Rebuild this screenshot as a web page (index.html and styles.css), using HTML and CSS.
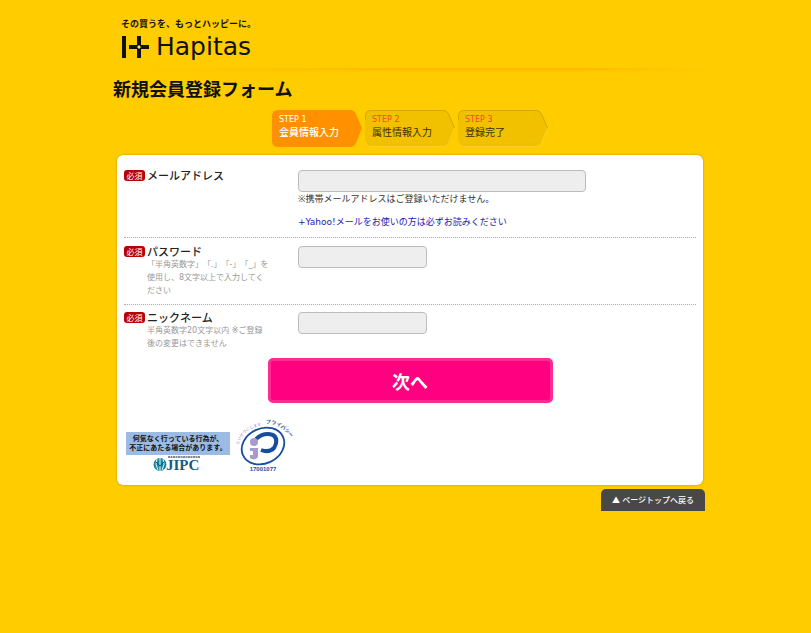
FILE: index.html
```html
<!DOCTYPE html>
<html lang="ja">
<head>
<meta charset="utf-8">
<meta name="viewport" content="width=device-width, initial-scale=1">
<title>新規会員登録フォーム</title>
<link rel="stylesheet" href="styles.css">
</head>
<body>
<div class="page">
  <header class="header">
    <p class="tagline">その買うを、もっとハッピーに。</p>
    <a class="logo" href="#">
      <svg class="logo-mark" viewBox="0 0 28 22" aria-hidden="true">
        <path d="M3 0v22M8 11h20M18 0v22" stroke="#111" stroke-width="4"/>
        <path d="M18 9l2 2l-2 2l-2-2z" fill="#ffe15a"/>
      </svg>
      <span class="logo-name">Hapitas</span>
    </a>
  </header>
  <main>
    <h1 class="title">新規会員登録フォーム</h1>
    <ol class="steps">
      <li class="step step-current">
        <svg class="step-shape" viewBox="0 0 90 37" aria-hidden="true"><path d="M6 0H78Q82 0 84 4L90 18L84 33Q82 37 78 37H6Q0 37 0 31V6Q0 0 6 0Z" fill="#ff9100"/></svg>
        <span class="step-no">STEP 1</span><span class="step-name">会員情報入力</span>
      </li>
      <li class="step">
        <svg class="step-shape" viewBox="0 0 90 37" aria-hidden="true"><path d="M6 0H78Q82 0 84 4L90 18L84 33Q82 36 78 36H6Q0 36 0 31V6Q0 0 6 0Z" fill="#f1c100"/><path d="M.5 10V6Q.5 .5 6 .5H78Q82 .5 83.500 4L89.500 18" fill="none" stroke="#d3a900"/><path d="M89.500 18L83.500 33Q82 36.500 78 36.500H6Q1 36.500 .5 31" fill="none" stroke="#fad02a"/></svg>
        <span class="step-no">STEP 2</span><span class="step-name">属性情報入力</span>
      </li>
      <li class="step">
        <svg class="step-shape" viewBox="0 0 90 37" aria-hidden="true"><path d="M6 0H78Q82 0 84 4L90 18L84 33Q82 36 78 36H6Q0 36 0 31V6Q0 0 6 0Z" fill="#f1c100"/><path d="M.5 10V6Q.5 .5 6 .5H78Q82 .5 83.500 4L89.500 18" fill="none" stroke="#d3a900"/><path d="M89.500 18L83.500 33Q82 36.500 78 36.500H6Q1 36.500 .5 31" fill="none" stroke="#fad02a"/></svg>
        <span class="step-no">STEP 3</span><span class="step-name">登録完了</span>
      </li>
    </ol>
    <form class="panel">
      <div class="row">
        <span class="badge">必須</span>
        <div class="caption"><label for="mail">メールアドレス</label></div>
        <div class="field">
          <input id="mail" class="input input-wide" type="email">
          <p class="note">※携帯メールアドレスはご登録いただけません。</p>
          <a class="note-link" href="#">+Yahoo!メールをお使いの方は必ずお読みください</a>
        </div>
      </div>
      <div class="row">
        <span class="badge">必須</span>
        <div class="caption"><label for="password">パスワード</label>
          <p class="help">「半角英数字」「.」「-」「_」を<br>使用し、8文字以上で入力してく<br>ださい</p></div>
        <div class="field"><input id="password" class="input" type="password"></div>
      </div>
      <div class="row">
        <span class="badge">必須</span>
        <div class="caption"><label for="nickname">ニックネーム</label>
          <p class="help">半角英数字20文字以内 ※ご登録<br>後の変更はできません</p></div>
        <div class="field"><input id="nickname" class="input" type="text"></div>
      </div>
      <button class="next" type="button">次へ</button>
      <div class="seals">
        <a class="jipc" href="#">
          <span class="jipc-text">何気なく行っている行為が、<br>不正にあたる場合があります。</span>
          <svg class="jipc-logo" viewBox="0 0 50 16" role="img" aria-label="JIPC">
            <path d="M15 1H47" stroke="#111" stroke-width="1" stroke-dasharray="2 .5"/>
            <ellipse cx="7" cy="8.500" rx="6.500" ry="6.500" fill="#1687a3"/>
            <path d="M4 3Q1.500 8 5 14M7 2V15M10 3Q12.500 8 9 14" fill="none" stroke="#e8f7fa" stroke-width="1"/>
            <path d="M3 6L7 10L11 6" fill="none" stroke="#0a4f70" stroke-width="1"/>
            <text x="13" y="14" class="jipc-name">JIPC</text>
          </svg>
        </a>
        <a class="pmark" href="#">
          <svg viewBox="0 0 56 56" role="img" aria-label="プライバシーマーク 17001077">
            <defs>
              <path id="arc-left" d="M3 28Q5 12 28 8"/>
              <path id="arc-right" d="M30 7Q43 5 56 22"/>
            </defs>
            <ellipse cx="27" cy="29" rx="22" ry="17.500" transform="rotate(-25 27 29)" fill="#fff" stroke="#174c9e" stroke-width="1.800"/>
            <path d="M20 22Q28 15 37 18Q43 22 38 31Q33 36 25 33" fill="none" stroke="#174c9e" stroke-width="4"/>
            <circle cx="18" cy="25" r="4" fill="#a69bd0"/>
            <path d="M14 31H22V40L20 42Q16 43 14 41V38H17V34H14Z" fill="#a69bd0"/>
            <text class="arc-soft"><textPath href="#arc-left">たいせつにします</textPath></text>
            <text class="arc-strong"><textPath href="#arc-right">プライバシー</textPath></text>
            <text x="27" y="54" class="pmark-no">17001077</text>
          </svg>
        </a>
      </div>
    </form>
  </main>
  <footer class="footer"><a class="to-top" href="#">▲ ページトップへ戻る</a></footer>
</div>
</body>
</html>
```
FILE: styles.css
```css
* { box-sizing: border-box; }
body {
  margin: 0;
  background: #fc0;
  color: #333;
  font-family: "Noto Sans", "Noto Sans CJK JP", sans-serif;
  font-size: 9px;
  line-height: 12px;
}
p, h1, ol { margin: 0; padding: 0; }
a { text-decoration: none; color: inherit; }
.page { max-width: 599px; margin: 0 auto; }

.header { padding: 18px 0 9px 15px; position: relative; }
.header::after {
  content: "";
  position: absolute;
  left: 0; right: 0; bottom: 0;
  height: 5px;
  background: linear-gradient(#ffb600, #fc0);
  -webkit-mask-image: linear-gradient(90deg, transparent 8%, #000 50%, #000 80%, transparent);
  mask-image: linear-gradient(90deg, transparent 8%, #000 50%, #000 80%, transparent);
}
.tagline { font-size: 9px; font-weight: 700; color: #111; }
.logo { display: flex; align-items: center; gap: 7px; height: 34px; color: #111; }
.logo-mark { width: 28px; height: 22px; }
.logo-name { font-family: "DejaVu Sans", sans-serif; font-size: 25px; line-height: 32px; }

.title { margin: 4px 0 8px 7px; font-size: 18px; line-height: 25px; font-weight: 700; color: #111; }
.steps { display: flex; gap: 3px; justify-content: center; list-style: none; margin-bottom: 8px; padding-left: 9px; }
.step { position: relative; width: 90px; height: 37px; padding: 4px 7px; display: flex; flex-direction: column; }
.step-shape { position: absolute; inset: 0; width: 100%; height: 100%; }
.step-no, .step-name { position: relative; }
.step-no { font-family: "DejaVu Sans", sans-serif; font-size: 8px; color: #ff4438; }
.step-name { font-size: 10px; color: #3b3000; }
.step-current span { color: #fff; }
.step-current .step-name { font-weight: 500; }

.panel {
  margin: 0 2px 0 11px;
  padding: 7px 7px 12px;
  background: #fff;
  box-shadow: 0 0 2px #a88600;
  border-radius: 6px;
}
.row {
  display: grid;
  grid-template-columns: 21px 149px 1fr;
  column-gap: 2px;
  align-items: start;
  padding: 8px 0 7px;
  border-bottom: 1px dotted #aaa;
}
.row:nth-of-type(3) { border-bottom: 0; padding: 7px 0 8px; }
.badge {
  background: #b90005;
  border-radius: 3px;
  color: #fff;
  font-size: 8px;
  line-height: 11px;
  text-align: center;
}
.caption label { display: block; font-size: 11px; font-weight: 500; color: #222; white-space: nowrap; }
.help {
  font-family: "DejaVu Sans", "Noto Sans CJK JP", sans-serif;
  font-size: 8px;
  line-height: 13px;
  color: #999;
  text-spacing-trim: space-all;
}
.input {
  display: block;
  width: 129px;
  height: 22px;
  max-width: 100%;
  padding: 0 6px;
  border: 1px solid #bbb;
  border-radius: 4px;
  background: #eee;
}
.input-wide { width: 288px; }
.note { margin: 1px 0 11px; }
.note-link {
  display: block;
  margin-bottom: 2px;
  color: #1a1ab8;
  font-family: "DejaVu Sans", "Noto Sans CJK JP", sans-serif;
}

.next {
  display: block;
  width: 285px;
  max-width: 100%;
  height: 45px;
  margin: 0 auto 14px;
  border: 3px solid #ff2b95;
  border-radius: 5px;
  background: #ff0080;
  color: #fff;
  font: 700 18px/24px "Noto Sans CJK JP", sans-serif;
}
.seals { display: flex; align-items: flex-end; gap: 6px; padding-left: 2px; }
.jipc { display: flex; flex-direction: column; align-items: center; }
.jipc-text {
  display: block;
  width: 104px;
  padding: 2px 0 3px;
  background: #9bbbe3;
  color: #111;
  font-size: 7px;
  line-height: 9px;
  font-weight: 700;
  text-align: center;
  white-space: nowrap;
}
.jipc-logo { width: 50px; height: 18px; }
.jipc-name { font: 700 15px "Liberation Serif", serif; fill: #155a83; }
.pmark svg { display: block; width: 56px; height: 56px; overflow: visible; }
.arc-soft { font-size: 4px; fill: #8f86c4; }
.arc-strong { font-size: 5px; font-weight: 700; fill: #174c9e; }
.pmark-no { font: 700 6px "Liberation Sans", sans-serif; fill: #174c9e; text-anchor: middle; }

.footer { display: flex; justify-content: flex-end; padding-top: 4px; }
.to-top {
  padding: 5px 11px;
  border-radius: 5px 5px 0 0;
  background: #484848;
  color: #fff;
  font-size: 8px;
  font-weight: 500;
}
```
